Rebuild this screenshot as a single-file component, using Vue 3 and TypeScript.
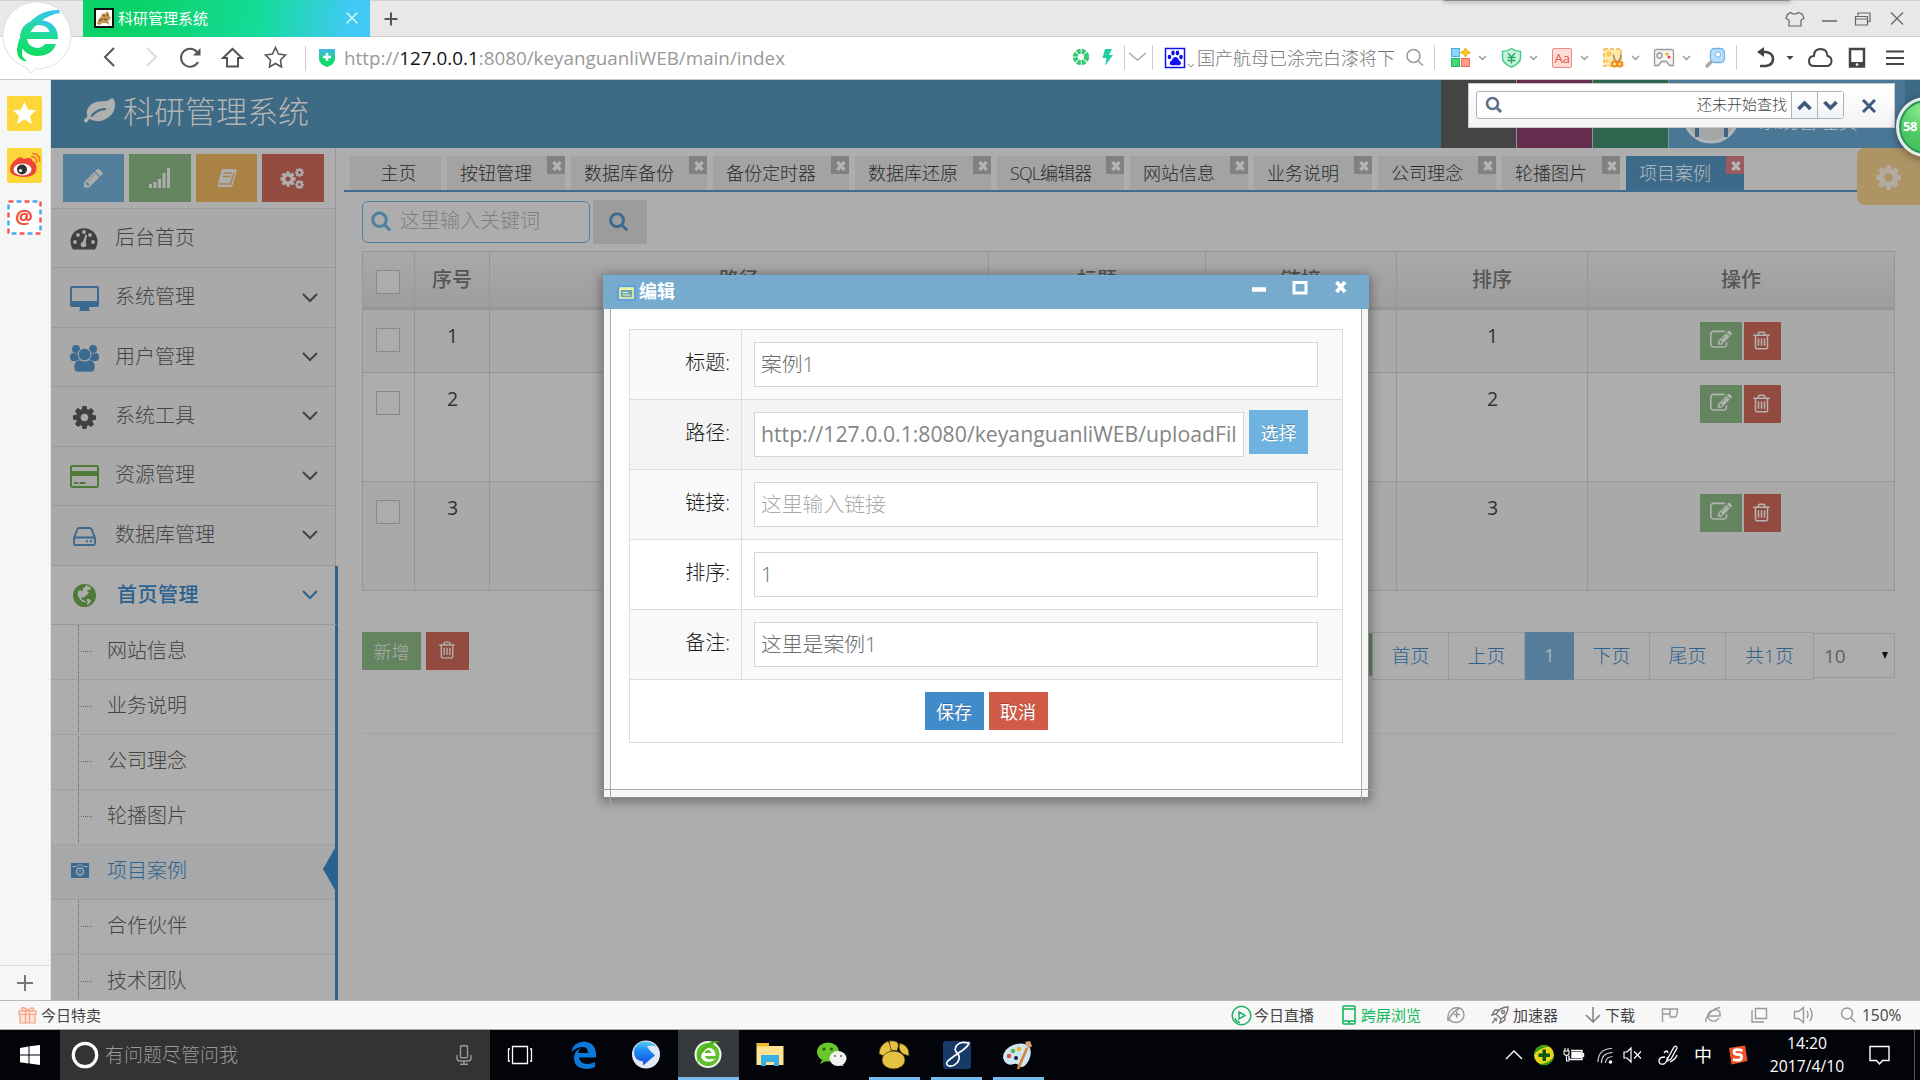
<script setup lang="ts">
interface Tab { name: string; w: number; closable: boolean; active?: boolean; tight?: boolean }
interface Menu { name: string; icon: string; arrow: boolean; open?: boolean }
interface Row { n: number; h: number }
interface Field { label: string; value: string; kind: string; placeholder?: boolean; pick?: boolean }

const P: Record<string, string> = {
  search: 'M1152 832q0-185-131.500-316.500t-316.500-131.500-316.500 131.500-131.500 316.500 131.500 316.500 316.500 131.500 316.500-131.500 131.500-316.500zM1664 1664q0 52-38 90t-90 38q-54 0-90-38l-343-342q-179 124-399 124-143 0-273.500-55.500t-225-150-150-225-55.500-273.500 55.500-273.500 150-225 225-150 273.500-55.500 273.500 55.500 225 150 150 225 55.500 273.500q0 220-124 399l343 343q37 37 37 90z',
  gear: 'M1024 896q0-106-75-181t-181-75-181 75-75 181 75 181 181 75 181-75 75-181zM1536 787v222q0 12-8 23t-20 13l-185 28q-19 54-39 91 35 50 107 138 10 12 10 25t-9 23q-27 37-99 108t-94 71q-12 0-26-9l-138-108q-44 23-91 38-16 136-29 186-7 28-36 28h-222q-14 0-24.500-8.500t-11.500-21.500l-28-184q-49-16-90-37l-141 107q-10 9-25 9-14 0-25-11-126-114-165-168-7-10-7-23 0-12 8-23 15-21 51-66.500t54-70.500q-27-50-41-99l-183-27q-13-2-21-12.500t-8-23.500v-222q0-12 8-23t19-13l186-28q14-46 39-92-40-57-107-138-10-12-10-24 0-10 9-23 26-36 98.500-107.500t94.500-71.500q13 0 26 10l138 107q44-23 91-38 16-136 29-186 7-28 36-28h222q14 0 24.500 8.500t11.500 21.500l28 184q49 16 90 37l142-107q9-9 24-9 13 0 25 10 129 119 165 170 7 8 7 22 0 12-8 23-15 21-51 66.500t-54 70.500q26 50 41 98l183 28q13 2 21 12.500t8 23.500z',
  trash: 'M512 736v576q0 14-9 23t-23 9h-64q-14 0-23-9t-9-23v-576q0-14 9-23t23-9h64q14 0 23 9t9 23zM768 736v576q0 14-9 23t-23 9h-64q-14 0-23-9t-9-23v-576q0-14 9-23t23-9h64q14 0 23 9t9 23zM1024 736v576q0 14-9 23t-23 9h-64q-14 0-23-9t-9-23v-576q0-14 9-23t23-9h64q14 0 23 9t9 23zM1152 1460v-948h-896v948q0 22 7 40.500t14.500 27 10.500 8.500h832q3 0 10.500-8.500t14.500-27 7-40.500zM480 384h448l-48-117q-7-9-17-11h-317q-10 2-17 11zM1408 416v64q0 14-9 23t-23 9h-96v948q0 83-47 143.500t-113 60.500h-832q-66 0-113-58.500t-47-141.500v-952h-96q-14 0-23-9t-9-23v-64q0-14 9-23t23-9h309l70-167q15-37 54-63t79-26h320q40 0 79 26t54 63l70 167h309q14 0 23 9t9 23z',
  edit: 'M888 1184l116-116-152-152-116 116v56h96v96h56zM1328 464q-16-16-33 1l-350 350q-17 17-1 33t33-1l350-350q17-17 1-33zM1408 1058v190q0 119-84.500 203.500t-203.500 84.500h-832q-119 0-203.500-84.500t-84.500-203.500v-832q0-119 84.500-203.500t203.500-84.500h832q63 0 117 25 15 7 18 23 3 17-9 29l-49 49q-14 14-32 8-23-6-45-6h-832q-66 0-113 47t-47 113v832q0 66 47 113t113 47h832q66 0 113-47t47-113v-126q0-13 9-22l64-64q15-15 35-7t20 29zM1312 320l288 288-672 672h-288v-288zM1756 452l-92 92-288-288 92-92q28-28 68-28t68 28l152 152q28 28 28 68t-28 68z',
  pencil: 'M363 1536l91-91-235-235-91 91v107h128v128h107zM886 608q0-22-22-22-10 0-17 7l-542 542q-7 7-7 17 0 22 22 22 10 0 17-7l542-542q7-7 7-17zM832 416l416 416-832 832h-416v-416zM1515 512q0 53-37 90l-166 166-416-416 166-165q36-38 90-38 53 0 91 38l235 234q37 39 37 91z',
  leaf: 'M1280 704q0-26-19-45t-45-19q-172 0-318 49.500t-259.500 134-235.500 219.500q-19 21-19 45 0 26 19 45t45 19q24 0 45-19 27-24 74-71t67-66q137-124 268.500-176t313.500-52q26 0 45-19t19-45zM1792 446q0 95-20 193-46 224-184.500 383t-357.500 268q-214 108-438 108-148 0-286-47-15-5-88-42t-96-37q-16 0-39.500 32t-45 70-52.500 70-60 32q-43 0-63.500-17.500t-45.500-59.500q-2-4-6-11t-5.500-10-3-9.500-1.500-13.500q0-35 31-73.500t68-65.500 68-56 31-48q0-4-14-38t-16-44q-9-51-9-104 0-115 43.500-220t119-184.500 170.500-139 204-95.500q55-18 145-25.500t179.500-9 178.500-6 163.500-24 113.500-56.500l29.500-29.500t29.500-28 27-20 36.500-16 43.500-4.500q39 0 70.500 46t47.500 112 24 124 8 96z',
}

const tabs: Tab[] = [
  { name: '主页', w: 91, closable: false },
  { name: '按钮管理', w: 118, closable: true },
  { name: '数据库备份', w: 136, closable: true },
  { name: '备份定时器', w: 136, closable: true },
  { name: '数据库还原', w: 136, closable: true },
  { name: 'SQL编辑器', w: 127, closable: true, tight: true },
  { name: '网站信息', w: 118, closable: true },
  { name: '业务说明', w: 118, closable: true },
  { name: '公司理念', w: 118, closable: true },
  { name: '轮播图片', w: 118, closable: true },
  { name: '项目案例', w: 118, closable: true, active: true },
]
const menus: Menu[] = [
  { name: '后台首页', icon: 'dash', arrow: false },
  { name: '系统管理', icon: 'desktop', arrow: true },
  { name: '用户管理', icon: 'users', arrow: true },
  { name: '系统工具', icon: 'gear', arrow: true },
  { name: '资源管理', icon: 'card', arrow: true },
  { name: '数据库管理', icon: 'hdd', arrow: true },
  { name: '首页管理', icon: 'globe', arrow: true, open: true },
]
const subs: string[] = ['网站信息', '业务说明', '公司理念', '轮播图片', '项目案例', '合作伙伴', '技术团队']
const rows: Row[] = [{ n: 1, h: 63 }, { n: 2, h: 109 }, { n: 3, h: 109 }]
const fields: Field[] = [
  { label: '标题:', value: '案例1', kind: 'odd' },
  { label: '路径:', value: 'http://127.0.0.1:8080/keyanguanliWEB/uploadFil', kind: 'hover', pick: true },
  { label: '链接:', value: '这里输入链接', kind: 'odd', placeholder: true },
  { label: '排序:', value: '1', kind: 'even' },
  { label: '备注:', value: '这里是案例1', kind: 'odd' },
]
</script>

<template>
  <div class="screen">
    <header class="tabstrip">
      <div class="btab">
        <svg class="fav" width="20" height="20" viewBox="0 0 20 20"><rect x="1" y="1" width="18" height="18" fill="#fff" stroke="#111" stroke-width="2" /><path d="M3 16l2-6 2-1 1-4 2 1 4-3 1 4 2 3-3 3 2 4-4-2-4 0-2 2z" fill="#c9954c" /><path d="M9 7l2 1M13 6l1 2M5 13l4-2M10 11l3 1" stroke="#5f4425" /></svg>
        <span class="btitle">科研管理系统</span>
        <svg width="12" height="12" viewBox="0 0 12 12"><path d="M.7.7l10.600 10.600M11.300.7L.7 11.300" stroke="#e8fff4" stroke-width="1.300" /></svg>
      </div>
      <svg class="plus" width="14" height="14" viewBox="0 0 14 14"><path d="M7 .5v13M.5 7h13" stroke="#555" stroke-width="2" /></svg>
      <svg class="winbtns" width="130" height="36" viewBox="0 0 130 36" fill="none" stroke="#666" stroke-width="1.200">
        <path d="M7.500 11.500q4 3 8 0l4 2 1.500 4-3 1.500v6h-12v-6l-3-1.500 1.500-4z" />
        <path d="M39 20h15" stroke-width="1.500" />
        <path d="M72.500 15.500h12v8.500h-12zM72.500 18h12M75 14.500v-2.500h12v8.500h-2" />
        <path d="M108 11.500l12 12M120 11.500l-12 12" />
      </svg>
    </header>

    <div class="toolbar">
      <svg class="nav" width="205" height="42" viewBox="95 37 205 42" fill="none" stroke="#555" stroke-width="2">
        <path d="M114 48l-9 9 9 9" />
        <path d="M147 48l9 9-9 9" stroke="#ddd" />
        <path d="M198 62a9 9 0 1 1-1-10" /><path d="M200.500 48v7.500h-7.500z" fill="#555" stroke="none" />
        <path d="M223 58l9.500-9 9.500 9h-4v8.500h-11v-8.500z" />
        <path d="M275.500 47.500l3 6.500 7 1-5 5 1 7-6-3.500-6 3.500 1-7-5-5 7-1z" stroke-width="1.600" />
      </svg>
      <i class="vline first" />
      <svg class="shield" width="16" height="18" viewBox="0 0 16 18"><defs><linearGradient id="sg" x1="0" y1="0" x2="0" y2="1"><stop stop-color="#42b8ee" /><stop offset=".6" stop-color="#12d970" /></linearGradient></defs><path d="M0 0h16v10q0 5-8 8-8-3-8-8z" fill="url(#sg)" /><path d="M8 4v8M4 8h8" stroke="#fff" stroke-width="2.600" /></svg>
      <span class="url">http://<b>127.0.0.1</b>:8080/keyanguanliWEB/main/index</span>
      <svg class="mid" width="126" height="42" viewBox="1070 37 126 42" fill="none">
        <circle cx="1081" cy="57" r="5.700" stroke="#35c873" stroke-width="5" stroke-dasharray="3.500 .97" />
        <path d="M1105 49h7l-3 6h4l-8 11 1.500-8h-4z" fill="#20d0a0" />
        <path d="M1124.500 45v25M1152.500 45v25" stroke="#ccc" />
        <path d="M1129 53l8.500 7 8.500-7" stroke="#aaa" stroke-width="1.600" />
        <rect x="1165.500" y="48.500" width="19" height="19" fill="#fff" stroke="#1010f0" stroke-width="1.500" />
        <g fill="#1010f0"><ellipse cx="1169.500" cy="57" rx="1.800" ry="2.300" /><ellipse cx="1173" cy="53" rx="1.800" ry="2.400" /><ellipse cx="1177.500" cy="53" rx="1.800" ry="2.400" /><ellipse cx="1181" cy="57" rx="1.800" ry="2.300" /><path d="M1175.200 57q2.500 0 3.500 3 3 2 2.300 4-1.200 2-5.300 1-5 1-6-1-.7-2 2.300-4 1-3 3.200-3z" /></g>
        <path d="M1188 64l3 3 3-3" stroke="#888" />
      </svg>
      <span class="hot">国产航母已涂完白漆将下</span>
      <svg class="ext" width="510" height="42" viewBox="1400 37 510 42" fill="none">
        <circle cx="1413.500" cy="56" r="6.500" stroke="#999" stroke-width="1.500" /><path d="M1418 61l5 4.500" stroke="#999" stroke-width="1.500" />
        <path d="M1434.500 45v25M1736.500 45v25" stroke="#ccc" />
        <rect x="1451.500" y="48.500" width="8" height="8" fill="#8fd5fa" stroke="#4aa8e8" /><rect x="1451.500" y="58.500" width="8" height="8" fill="#45d877" stroke="#15b858" /><rect x="1461.500" y="58.500" width="8" height="8" fill="#ffa08e" stroke="#f26a55" /><path d="M1465.500 48l1.500 3 3.500 1.500-3.500 1.500-1.500 3-1.500-3-3.500-1.500 3.500-1.500z" fill="#ffcf20" stroke="#f0a000" />
        <path d="M1511.500 48.500q4 3 9 3v6q0 6-9 9.500-9-3.500-9-9.500v-6q5 0 9-3z" fill="#c9f5dc" stroke="#48c886" stroke-width="1.500" /><path d="M1508 53l3.500 4 3.500-4M1507.500 57.500h8M1507.500 60.500h8M1511.500 57v6.500" stroke="#28a860" stroke-width="1.400" />
        <rect x="1552.500" y="48.500" width="19" height="19" rx="1.500" fill="#ffdcd7" stroke="#e98b82" />
        <text x="1554.500" y="63" class="aa">Aa</text>
        <rect x="1604" y="49" width="17" height="17" fill="#ffe9a8" stroke="#f2bc4d" stroke-width="1.600" stroke-dasharray="4 2" /><circle cx="1609" cy="54" r="2.500" fill="#f7c95c" /><circle cx="1607" cy="61" r="1.500" fill="#f7c95c" /><path d="M1613.500 54.500q0 5 4 8M1621 54.500q0 5-4 8" stroke="#9a8a70" stroke-width="1.600" /><circle cx="1614.500" cy="64" r="2.500" stroke="#ef8e1c" stroke-width="2" /><circle cx="1620" cy="64" r="2.500" stroke="#ef8e1c" stroke-width="2" />
        <path d="M1656 49.500h16q1.500 0 1.500 2v14h-4l-3-4h-5l-3 4h-4v-14q0-2 1.500-2z" fill="#f4f4f4" stroke="#999" stroke-width="1.300" /><circle cx="1659.500" cy="55.500" r="2.500" stroke="#999" stroke-width="1.300" /><circle cx="1667" cy="54" r="1.500" fill="#f5a623" /><circle cx="1669" cy="57" r="1.500" fill="#e8433c" />
        <path d="M1712 61l-5 5" stroke="#aaa" stroke-width="3.500" stroke-linecap="round" /><rect x="1710.500" y="48.500" width="14" height="14" rx="4" fill="#b8dffa" stroke="#6fb4e5" stroke-width="1.300" /><circle cx="1718" cy="54.500" r="2.700" fill="#fff" stroke="#6fb4e5" />
        <path d="M1479 56l3.500 3.500 3.500-3.500M1530 56l3.500 3.500 3.500-3.500M1581 56l3.500 3.500 3.500-3.500M1632 56l3.500 3.500 3.500-3.500M1683 56l3.500 3.500 3.500-3.500" stroke="#999" stroke-width="1.400" />
        <path d="M1760 52h6q7 1 7 7t-7 7h-6" stroke="#444" stroke-width="2.600" /><path d="M1757 52l7-5v10z" fill="#444" /><path d="M1786.500 56h7l-3.500 4z" fill="#444" />
        <path d="M1814 66q-5 0-5-5t5-5q0-7 6.500-7t7 7q4 1 4 5t-4 5z" stroke="#444" stroke-width="2" />
        <rect x="1850" y="49" width="14" height="17.500" stroke="#444" stroke-width="2.500" /><path d="M1849 64.500h16" stroke="#444" stroke-width="5" /><circle cx="1857" cy="64.500" r="1.300" fill="#fff" />
        <path d="M1886 51.500h18M1886 58h18M1886 64h18" stroke="#444" stroke-width="2" />
      </svg>
    </div>

    <div class="middle">
      <aside class="rail">
        <svg width="35" height="35" viewBox="0 0 35 35"><rect width="35" height="35" rx="2" fill="#fdd63a" /><path d="M17.500 6l3.500 7.500 8 .8-6 5.700 2 8-7.500-4.500-7.500 4.500 2-8-6-5.700 8-.8z" fill="#fff" /></svg>
        <svg width="35" height="35" viewBox="0 0 35 35"><rect width="35" height="35" rx="2" fill="#fdd63a" /><path d="M3 22q0-7 8-12 4-2 5.500 1 8-3 9 2 4 2 4 7 0 9-13 9-13.500-1-13.500-7z" fill="#ee4538" /><ellipse cx="15.500" cy="21.500" rx="9" ry="6" fill="#fff" /><circle cx="15" cy="21.500" r="5" fill="#333" /><circle cx="13.500" cy="22.500" r="1.600" fill="#fff" /><path d="M24 9q6-1 5.500 6M25 5.500q8.500 0 7.500 8.500" fill="none" stroke="#f27b24" stroke-width="1.700" /></svg>
        <svg width="35" height="35" viewBox="0 0 35 35"><rect x="1.500" y="1.500" width="32" height="32" fill="#fff" stroke="#f45b45" stroke-width="2.500" stroke-dasharray="5 11" /><rect x="1.500" y="1.500" width="32" height="32" fill="none" stroke="#45acf0" stroke-width="2.500" stroke-dasharray="5 11" stroke-dashoffset="8" /><text x="8" y="23.500" class="at">@</text></svg>
        <div class="railadd"><svg width="16" height="16" viewBox="0 0 16 16"><path d="M8 0v16M0 8h16" stroke="#777" stroke-width="2" /></svg></div>
      </aside>

      <main class="page">
        <div class="top">
          <svg class="leaf" width="31" height="31" viewBox="0 0 1792 1792"><path :d="P.leaf" fill="#b0b0b0" /></svg>
          <span class="brand">科研管理系统</span>
          <div class="tiles"><i class="t1" /><i class="t2" /><i class="t3" />
            <div class="user">
              <svg width="60" height="60" viewBox="0 0 60 60"><circle cx="30" cy="30" r="27" fill="#a3a5a7" stroke="#b0b5b9" stroke-width="3" /><path d="M16 40v12M45 40v12" stroke="#3f6384" stroke-width="4" /></svg>
              <span>系统管理员</span>
            </div>
          </div>
        </div>
        <div class="body">
          <div class="side">
            <div class="shortcuts">
              <span class="s1"><svg width="19" height="22" viewBox="0 0 1536 1792"><path :d="P.pencil" fill="#adadad" /></svg></span>
              <span class="s2"><svg width="22" height="20" viewBox="0 0 22 20" fill="#adadad"><path d="M0 16h3v4h-3zM4.500 14h3v6h-3zM9 11h3v9h-3zM13.500 5h3v15h-3zM18 0h3v20h-3z" /></svg></span>
              <span class="s3"><svg width="22" height="20" viewBox="0 0 22 20"><path d="M6.500 1h12q2.500 0 2 2.500l-3.500 13q-.5 2.500-3 2.500h-10q-3-.5-2-3l3-12.500q.5-2.500 1.500-2.500z" fill="#adadad" /><path d="M8 5h8M7 8.500h8M3.500 16h11l3.500-11" fill="none" stroke="#aa8344" stroke-width="1.400" /></svg></span>
              <span class="s4"><svg width="26" height="23" viewBox="0 0 26 23" fill="#adadad"><svg x="0" y="3" width="16" height="18" viewBox="0 0 1536 1792"><path :d="P.gear" /></svg><svg x="15" y="0" width="9" height="11" viewBox="0 0 1536 1792"><path :d="P.gear" /></svg><svg x="15" y="12" width="9" height="11" viewBox="0 0 1536 1792"><path :d="P.gear" /></svg></svg></span>
            </div>
            <div v-for="m in menus" :key="m.name" class="menu" :class="{ open: m.open }">
              <span class="micon">
                <svg v-if="m.icon === 'dash'" width="28" height="22" viewBox="0 0 28 22"><path d="M3 21.500a13.500 13.500 0 1 1 22 0z" fill="#404040" /><g fill="#a9a9a9"><circle cx="5" cy="14" r="1.900" /><circle cx="8" cy="7" r="1.900" /><circle cx="14" cy="4" r="1.900" /><circle cx="20" cy="7" r="1.900" /><circle cx="23" cy="14" r="1.900" /><circle cx="13.500" cy="16.500" r="2.800" /><path d="M12.500 15l3-8.500 1.500.5-1.500 9z" /></g></svg>
                <svg v-else-if="m.icon === 'desktop'" width="29" height="25" viewBox="0 0 29 25"><path d="M2 0h25q2 0 2 2v17q0 2-2 2h-8v2l1 2h-11l1-2v-2h-8q-2 0-2-2v-17q0-2 2-2zM2 2v13h25v-13z" fill="#3c698f" fill-rule="evenodd" /></svg>
                <svg v-else-if="m.icon === 'users'" width="29" height="27" viewBox="0 0 29 27" fill="#3c698f"><circle cx="6" cy="4" r="4" /><circle cx="23" cy="4" r="4" /><path d="M0 12q0-4 3-4 3 1 5 0 0 5 3 8h-8q-3 0-3-4zM29 12q0-4-3-4-3 1-5 0 0 5-3 8h8q3 0 3-4z" /><circle cx="14.500" cy="9.500" r="6.300" stroke="#a9a9a9" /><path d="M4 23q0-8 5-8 5.500 2.500 11 0 5 0 5 8 0 4-4 4h-13q-4 0-4-4z" stroke="#a9a9a9" stroke-width=".6" /></svg>
                <svg v-else-if="m.icon === 'gear'" width="23" height="27" viewBox="0 0 1536 1792"><path :d="P.gear" fill="#404040" /></svg>
                <svg v-else-if="m.icon === 'card'" width="29" height="23" viewBox="0 0 29 23"><rect x="1" y="1" width="27" height="21" rx="1.500" fill="none" stroke="#4d7a36" stroke-width="2" /><path d="M1 6h27v5h-27zM4 17h4v2h-4zM9.500 17h6v2h-6z" fill="#4d7a36" /></svg>
                <svg v-else-if="m.icon === 'hdd'" width="23" height="19" viewBox="0 0 23 19" fill="none" stroke="#3c698f" stroke-width="1.900"><path d="M1 11l3.500-9q.4-1 1.500-1h11q1 0 1.500 1l3.500 9v5.500q0 1.500-1.500 1.500h-18q-1.500 0-1.500-1.500zM1 10.500h21" /><path d="M13 14.300h2M17 14.300h2" /></svg>
                <svg v-else width="23" height="23" viewBox="0 0 23 23"><circle cx="11.500" cy="11.500" r="11.500" fill="#4d7a36" /><path d="M13 1.500l3 .8 2 2-1 2.200-2-1-1 2 2 .5-1.500 2.500-2 1-1 2-3-.5.5 2.500 2 1 2 1-1 1-3-1-3-3.500-1.500-4 1-3 2-1 1 1.500 1.500-1.500-.5-2 2.500-.5 0-1.500zM13.500 15l3 0 1.500 2-2 3-2 1 .5-3z" fill="#adadad" /></svg>
              </span>
              <span class="mname">{{ m.name }}</span>
              <svg v-if="m.arrow" class="chev" width="16" height="10" viewBox="0 0 16 10"><path d="M1 1l7 7 7-7" fill="none" stroke="currentColor" stroke-width="2" /></svg>
            </div>
            <div class="subs">
              <div v-for="s in subs" :key="s" class="sub" :class="{ on: s === '项目案例' }">
                <svg v-if="s === '项目案例'" class="cam" width="18" height="15" viewBox="0 0 18 15"><path d="M0 0h18v15h-18z" fill="#3c698f" /><path d="M1 3.500h5l1-1.500h4l1 1.500h5" fill="none" stroke="#9a9fa4" /><circle cx="9" cy="8.500" r="3.500" fill="none" stroke="#a6a9ac" stroke-width="1.400" /><path d="M9 7v3" stroke="#a6a9ac" /></svg>
                <i v-else class="dash" />
                <span>{{ s }}</span>
                <i v-if="s === '项目案例'" class="arrow" />
              </div>
            </div>
          </div>

          <section class="content">
            <div class="tabs">
              <div v-for="t in tabs" :key="t.name" class="tab" :class="{ on: t.active, home: !t.closable, tight: t.tight }" :style="{ width: t.w + 'px' }">
                <span>{{ t.name }}</span>
                <i v-if="t.closable" class="x"><svg width="10" height="10" viewBox="0 0 10 10"><path d="M1.500 1l7 8M8.500 1l-7 8" stroke="#b4b4b4" stroke-width="3.400" /></svg></i>
              </div>
            </div>
            <div class="inner">
              <div class="find">
                <div class="kw"><svg width="20" height="21" viewBox="0 0 1664 1792"><path :d="P.search" fill="#4c80a0" /></svg><span>这里输入关键词</span></div>
                <div class="go"><svg width="19" height="20" viewBox="0 0 1664 1792"><path :d="P.search" fill="#3c698f" /></svg></div>
              </div>
              <div class="grid">
                <div class="tr th"><div><i class="cb" /></div><div>序号</div><div>路径</div><div>标题</div><div>链接</div><div>排序</div><div>操作</div></div>
                <div v-for="r in rows" :key="r.n" class="tr" :class="{ alt: r.n !== 2 }" :style="{ height: r.h + 'px' }">
                  <div><i class="cb" /></div><div>{{ r.n }}</div><div /><div /><div /><div>{{ r.n }}</div>
                  <div class="ops"><span class="e"><svg width="22" height="22" viewBox="0 0 1792 1792"><path :d="P.edit" /></svg></span><span class="d"><svg width="17" height="21" viewBox="0 0 1408 1792"><path :d="P.trash" /></svg></span></div>
                </div>
              </div>
              <div class="foot">
                <span class="add">新增</span><span class="del"><svg width="16" height="20" viewBox="0 0 1408 1792"><path :d="P.trash" fill="#adadad" /></svg></span>
                <i class="sp" /><i class="gobtn" />
                <div class="pager"><span>首页</span><span>上页</span><span class="cur">1</span><span>下页</span><span>尾页</span><span class="tot">共1页</span></div>
                <div class="sel"><span>10</span><svg width="6" height="7" viewBox="0 0 6 7"><path d="M0 0h6l-3 7z" fill="#111" /></svg></div>
              </div>
              <div class="hr" />
            </div>
          </section>
        </div>

        <div class="setbox"><svg width="25" height="29" viewBox="0 0 1536 1792"><path :d="P.gear" fill="#b3aaa0" /></svg></div>

        <div class="findbar">
          <div class="fin"><svg width="18" height="18" viewBox="0 0 18 18"><circle cx="7.500" cy="7.500" r="5.500" fill="none" stroke="#5b7188" stroke-width="2.600" /><path d="M12 12l4 4" stroke="#5b7188" stroke-width="3" /></svg><span>还未开始查找</span>
            <i class="fb"><svg width="15" height="11" viewBox="0 0 15 11"><path d="M1.500 9l6-6 6 6" fill="none" stroke="#40597a" stroke-width="3.600" /></svg></i><i class="fb"><svg width="15" height="11" viewBox="0 0 15 11"><path d="M1.500 2l6 6 6-6" fill="none" stroke="#40597a" stroke-width="3.600" /></svg></i></div>
          <svg class="fx" width="14" height="14" viewBox="0 0 14 14"><path d="M1 1l12 12M13 1L1 13" stroke="#40597a" stroke-width="3" /></svg>
        </div>
        <div class="ball">58</div>

        <div class="dialog">
          <div class="dhead">
            <svg class="di" width="15" height="12" viewBox="0 0 15 12"><rect x="1" y="1" width="13" height="10" fill="#6fa8b8" stroke="#eef29b" stroke-width="1.600" /><path d="M1 2h13" stroke="#eef29b" stroke-width="2" /><path d="M4 5.500h5M4 8h7" stroke="#eef6b8" /></svg>
            <b>编辑</b>
            <svg width="100" height="16" viewBox="0 0 100 16" fill="none" stroke="#fff"><path d="M0 9.500h14" stroke-width="4.500" /><rect x="42" y="2.500" width="12" height="10.500" stroke-width="3" /><path d="M84.500 2l8.500 10M93 2l-8.500 10" stroke-width="3.600" /></svg>
          </div>
          <div class="dbody">
            <div class="frame">
              <div class="form">
                <div v-for="f in fields" :key="f.label" class="fr" :class="f.kind">
                  <div class="lab">{{ f.label }}</div>
                  <div class="val"><div class="inp" :class="{ ph: f.placeholder, short: f.pick }">{{ f.value }}</div><span v-if="f.pick" class="pick">选择</span></div>
                </div>
                <div class="acts"><span class="save">保存</span><span class="cancel">取消</span></div>
              </div>
            </div>
          </div>
        </div>
      </main>
    </div>

    <div class="status">
      <svg class="gift" width="19" height="18" viewBox="0 0 19 18" fill="#ffe3d6" stroke="#f5a184" stroke-width="1.200"><path d="M9.500 4q-5-4-6-1.500t6 2q7 1 6-1.500t-6 1z" /><path d="M1 5h17v3.500h-17zM2 8.500h15v8.500h-15zM7.500 5v12M11.500 5v12" /></svg>
      <span class="sale">今日特卖</span>
      <svg class="play" width="21" height="21" viewBox="0 0 21 21" fill="none" stroke="#22b26a" stroke-width="1.500"><circle cx="10.500" cy="10.500" r="9.300" /><path d="M8 7l6 3.500-6 3.500zM4 13q1 4 5 4.500" /></svg>
      <span class="live">今日直播</span>
      <svg width="14" height="20" viewBox="0 0 14 20" fill="none" stroke="#13b85a" stroke-width="1.600"><rect x="1" y="1" width="12" height="18" rx="1" /><path d="M1 4h12M1 16h12M6 17.500h2" /></svg>
      <span class="cross">跨屏浏览</span>
      <svg width="18" height="18" viewBox="0 0 18 18" fill="none" stroke="#999" stroke-width="1.400"><path d="M10 1.500q6.500.5 7 7-.5 7.500-8 8-4 0-6-2.500M1 15q-1-9 5-12.500 4-1.500 6 0-8 4-10.500 12.500" /><path d="M6.500 8.500h6.500M9.700 5.300v6.500" /></svg>
      <svg class="s-b" width="18" height="18" viewBox="0 0 18 18" fill="none" stroke="#777" stroke-width="1.400"><path d="M5 8q4-7 12-7 0 8-7 12zM5 8l-4 1 3-5h4M10 13l-1 4 5-3v-4M1 17l5-5M3 12l3 3" /><circle cx="12" cy="6" r="1.500" /></svg>
      <span class="acc">加速器</span>
      <svg class="s-c" width="16" height="16" viewBox="0 0 16 16" fill="none" stroke="#888" stroke-width="1.600"><path d="M8 0v14M1 8l7 7 7-7" /></svg>
      <span class="dl">下载</span>
      <svg class="s-d" width="245" height="28" viewBox="1640 1001 245 28" fill="none" stroke="#999" stroke-width="1.400">
        <path d="M1662.500 1022v-13h15q0 6-2 8h-5l-1-3h-7M1670 1009v5" />
        <path d="M1707 1016h13q1-7-6-6-7 2-6 7 2 5 7 4 3-1 4-3M1706 1022q-1-5 6-11 6-4 8-3" />
        <path d="M1755.500 1008.500h11v10h-11zM1752 1010v12h12" />
        <path d="M1794.500 1011.500h4l5-4v15l-5-4h-4zM1807 1011q2 3.500 0 7M1810 1008q4 6.500 0 13" />
        <circle cx="1847" cy="1013.500" r="5.500" /><path d="M1851 1018l4 4" />
      </svg>
      <span class="zoom">150%</span>
    </div>

    <div class="taskbar">
      <div class="start"><svg width="20" height="20" viewBox="0 0 20 20" fill="#fff"><path d="M0 3l8.500-1.500v8h-8.500zM9.500 1.300l10.500-1.300v9.500h-10.500zM0 10.500h8.500v8l-8.500-1.300zM9.500 10.500h10.500v9.500l-10.500-1.500z" /></svg></div>
      <div class="cortana"><svg width="28" height="28" viewBox="0 0 28 28"><circle cx="14" cy="14" r="11.700" fill="none" stroke="#fff" stroke-width="3.200" /></svg><span>有问题尽管问我</span>
        <svg class="mic" width="16" height="20" viewBox="0 0 16 20" fill="none" stroke="#999" stroke-width="1.400"><rect x="4.500" y=".7" width="7" height="12" rx="1" /><path d="M1 10v3q0 3 3 3h8q3 0 3-3v-3M8 16v3M4 19.200h8" /></svg></div>
      <svg class="apps" width="560" height="50" viewBox="490 1030 560 50">
        <defs>
          <linearGradient id="qb" x1="0" y1="0" x2="0" y2="1"><stop stop-color="#5cd0ea" /><stop offset=".35" stop-color="#1f8df5" /><stop offset="1" stop-color="#1450d8" /></linearGradient>
        </defs>
        <path d="M512.500 1046.500h15v17h-15zM510 1049h-1.500v12h1.500M530 1049h1.500v12h-1.500" fill="none" stroke="#fff" stroke-width="1.300" />
        <path d="M571 1053q2-11 13-11.500 12 1 12 13.500v2.500h-17q1 6 8 6.500 4 0 8-2v5q-4 2-9 2-12-1-12-11 0-7 7-10-3 3-3 5h10q0-6-5-6-7 0-12 5.500z" fill="#0c79d8" />
        <circle cx="646" cy="1054.500" r="14" fill="#dfe8f4" /><path d="M634 1052q1-10 11-10.500 7 0 11 5-6-2-9 0l2 3 6 6-12 10v-4q-9-1-9-9.500z" fill="url(#qb)" />
        <rect x="678" y="1030" width="61" height="50" fill="#35383c" />
        <circle cx="708" cy="1054.500" r="13.500" fill="#f2f8ee" /><circle cx="708" cy="1054.500" r="11.500" fill="#5fc12c" /><path d="M701 1056h14.500q0-8-7-8-7 1-7.500 7 0 6 7.500 7 4 0 6.500-3h-4q-5 1-6-3z" fill="#fff" /><path d="M704.500 1053h7q-1-3-3.500-3t-3.500 3z" fill="#5fc12c" /><path d="M698 1069q-2-10 7-19 8-8 15-8-6-3-13 2-12 9-9 25z" fill="#52b31f" />
        <path d="M756.500 1043h12v3h15v19h-27z" fill="#ffe391" /><path d="M757 1043h12v3.500h-12z" fill="#f0b92c" /><path d="M761 1066v-11h18v11h-5v-4h-8v4z" fill="#37aee5" />
        <ellipse cx="828" cy="1052" rx="11" ry="9.500" fill="#67c72c" /><path d="M822 1060l-2 4 6-3z" fill="#67c72c" /><ellipse cx="838" cy="1058.500" rx="8.500" ry="7.500" fill="#f2f2f2" /><path d="M842 1064l2 2-5-1z" fill="#f2f2f2" /><circle cx="824" cy="1049" r="1.500" fill="#2b5c10" /><circle cx="831.500" cy="1049" r="1.500" fill="#2b5c10" /><circle cx="835" cy="1056" r="1" fill="#666" /><circle cx="841" cy="1056" r="1" fill="#666" />
        <g fill="#e5c244" stroke="#3a2f08" stroke-width=".7"><path d="M879 1054q0-9 9-13l5 9-9 6z" /><path d="M889 1041q10-1 9.500 5l-1.500 5-6-1z" /><path d="M900 1043q10 3 9 13l-6-2q-4-3-4-7z" /><ellipse cx="893.500" cy="1060" rx="11.500" ry="9" /></g>
        <rect x="943" y="1041" width="28" height="28" rx="3" fill="#173a66" /><path d="M968 1043q-7-2-11 2-4 5 1 9 3 4-1 9-4 4-8 3-5-2 0-6t11-8 8-7 0-2z" fill="none" stroke="#fff" stroke-width="1.700" />
        <path d="M1003 1058q0-9 10-13 12-4 17 3 2 6-1 12-4 8-9 7-2-4-6-3-8 3-11-6z" fill="#cfe6f4" /><circle cx="1009" cy="1056" r="2.300" fill="#e25241" /><circle cx="1013" cy="1051" r="2.300" fill="#62b74f" /><circle cx="1019" cy="1049" r="2.300" fill="#f1b22c" /><circle cx="1016" cy="1058" r="2" fill="#132a44" /><path d="M1018 1069l9-21" stroke="#d98333" stroke-width="2.600" /><path d="M1025 1042l5-1 2 5-4 3z" fill="#d9a176" />
        <path d="M678 1077h61v3h-61zM869 1077h51v3h-51zM931 1077h51v3h-51zM993 1077h51v3h-51z" fill="#76b9ed" />
      </svg>
      <i class="sp" />
      <svg class="tray" width="190" height="50" viewBox="1500 1030 190 50" fill="none" stroke="#fff" stroke-width="1.400">
        <path d="M1505 1059l8-8 8 8" />
        <g stroke="none"><circle cx="1543" cy="1055" r="10" fill="#e8d81c" /><path d="M1533 1055a10 10 0 0 1 15-8.500q-10 1-15 8.500zM1553 1056a10 10 0 0 1-15 8q10 0 15-8z" fill="#2f9a18" /><path d="M1541.500 1049.500h3.500v4h4v3.500h-4v4h-3.500v-4h-4v-3.500h4z" fill="#0f5512" /></g>
        <path d="M1570 1050.500h11v9h-13v-4M1582.500 1053v4" /><path d="M1571 1052.500h9v5h-9z" fill="#fff" /><path d="M1564 1048v3M1567 1048v3M1563 1051h5v3l-2.500 2-2.500-2zM1565.500 1056v5h3" stroke-width="1.100" />
        <path d="M1597 1062q0-13 14-13.500M1600.500 1063q0-10 11-10.500M1604.500 1063q0-6 7-6.500" stroke="#ccc" stroke-width="1.200" /><circle cx="1609.500" cy="1062" r="1.800" fill="#fff" stroke="none" />
        <path d="M1623 1052h3l4-4v14l-4-4h-3zM1633 1051.500l7 7M1640 1051.500l-7 7" stroke-width="1.200" />
        <path d="M1667 1058l6-11q3-2 3 1l-6 11-4 2zM1664 1057q-6 0-6 4t5 3q4-3 3-7M1669 1062q6-3 7-7M1663 1053q3-4 4 0" stroke-width="1.300" />
      </svg>
      <span class="ime">中</span>
      <svg class="sogou" width="20" height="20" viewBox="0 0 20 20"><path d="M1 3l16-2.500 2.500 15.500-16 3.500z" fill="#ee5425" /><path d="M14.500 5.500q-8-2-8.500 1t4 3 3.500 3.500-8.500 1.500" fill="none" stroke="#fff" stroke-width="2.800" /></svg>
      <div class="clock"><span>14:20</span><span>2017/4/10</span></div>
      <svg class="note" width="21" height="21" viewBox="0 0 21 21" fill="none" stroke="#fff" stroke-width="1.400"><path d="M1 1.500h19v14h-6.500l-3 3.500-3-3.500h-6.500z" /></svg>
      <i class="edge" />
    </div>

    <svg class="logo" width="75" height="76" viewBox="0 0 75 76"><defs><linearGradient id="lg" x1=".6" y1="0" x2=".4" y2="1"><stop stop-color="#35c3f2" /><stop offset=".4" stop-color="#1fdc93" /><stop offset="1" stop-color="#0fdc62" /></linearGradient></defs>
      <path d="M37.500 2a33.500 33.500 0 0 1 0 67h-2l-5 4.500-4-6a33.500 33.500 0 0 1 11-65.500z" fill="#fff" stroke="#d8d8d8" stroke-width=".8" />
      <path d="M20 37q1-16 19-17 19 1 19 19h-31q1 8 10 9 5 0 8-4h11q-4 12-19 12-17-1-17-19zM27.500 32h22q-1-6-10.500-7-10 1-11.500 7z" fill="url(#lg)" fill-rule="evenodd" />
      <path d="M28 61q-11 1-11-12 2-17 15-29 12-11 27-10l1 4q-2-2-8 1-14 5-23 19-8 14-7 21 2 5 6 6z" fill="url(#lg)" />
    </svg>
    <i class="topshade" />
  </div>
</template>

<style>
html, body { margin: 0; overflow: hidden; }
</style>
<style scoped>
* { box-sizing: border-box; }
i { font-style: normal; display: block; }
svg { flex: none; display: block; }
.screen { position: relative; width: 1920px; height: 1080px; display: flex; flex-direction: column; overflow: hidden; font-family: "Open Sans", "Noto Sans CJK SC", sans-serif; white-space: nowrap; }
.sp { flex: 1; }
.tabstrip { height: 37px; flex: none; background: #e8e8e8; border-top: 1px solid #d2d2d2; border-bottom: 1px solid #cfcfcf; padding-left: 83px; display: flex; align-items: center; }
.btab { width: 287px; height: 37px; margin-top: -1px; background: linear-gradient(100deg, #0bd268 20%, #14dc9a 62%, #41c9f5 92%); display: flex; align-items: center; padding: 0 12px 0 11px; color: #fff; }
.fav { margin-right: 4px; }
.btitle { flex: 1; font: 15px "Noto Sans CJK SC", sans-serif; margin-top: -1px; }
.plus { margin-left: 14px; }
.winbtns { margin-left: auto; margin-right: 7px; }
.toolbar { height: 43px; flex: none; background: #fff; border-bottom: 1px solid #c8c8c8; display: flex; align-items: center; padding-left: 95px; }
.vline { width: 1px; height: 25px; background: #ccc; }
.first { margin-left: 5px; }
.shield { margin: 0 9px 0 13px; }
.url { font-size: 18.840px; color: #999; width: 726px; }
.url b { font-weight: 400; color: #111; }
.hot { width: 200px; padding-left: 1px; font: 300 18px "Noto Sans CJK SC", sans-serif; color: #777; margin-right: 4px; margin-top: -2px; }
.aa { font: 13px "Open Sans", sans-serif; fill: #e0524a; }
.at { font: bold 20px "Open Sans", sans-serif; fill: #f0503c; }
.middle { height: 920px; flex: none; display: flex; }
.rail { width: 51px; background: #f5f7f7; border-right: 1px solid #e2e4e4; display: flex; flex-direction: column; align-items: center; padding-top: 16px; gap: 17px; }
.rail > svg { margin-right: 1px; }
.railadd { margin-top: auto; width: 50px; height: 35px; border-top: 1px solid #ddd; display: flex; align-items: center; justify-content: center; }
.page { position: relative; width: 1869px; height: 920px; background: #adadad; overflow: hidden; display: flex; flex-direction: column; }
.top { height: 68px; flex: none; background: #3d6a84; display: flex; align-items: center; padding-left: 33px; }
.leaf { margin-top: -3px; }
.brand { margin: -7px 0 0 8px; font-size: 31px; font-weight: 300; color: #b4b4b4; line-height: 40px; }
.tiles { margin-left: auto; display: flex; gap: 1px; height: 68px; padding-right: 15px; background: linear-gradient(#3d6a84, #3d6a84) right / 15px 100% no-repeat #8d9296; }
.tiles i { width: 75px; }
.t1 { background: #444; } .t2 { background: #652e4e; } .t3 { background: #2f644e; }
.user { width: 236px; background: #4b7797; display: flex; align-items: center; padding-left: 12px; color: #adb5bb; font-size: 20px; font-weight: 300; gap: 17px; }
.user svg { margin-top: 2px; }
.user span { margin-top: 12px; }
.body { display: flex; height: 852px; }
.side { width: 285px; flex: none; border-right: 1px solid #969696; background: #a9a9a9; }
.shortcuts { height: 61px; display: flex; gap: 5px; padding: 6px 0 0 12px; border-bottom: 1px solid #9b9b9b; background: #adadad; }
.shortcuts span { width: 62px; height: 48px; display: flex; align-items: center; justify-content: center; }
.shortcuts .s1, .shortcuts .s3 { width: 61px; }
.s1 { background: #547f9c; } .s2 { background: #64845f; } .s3 { background: #aa8344; } .s4 { background: #934b40; }
.menu { height: 59.430px; border-bottom: 1px solid #999; display: flex; align-items: center; color: #444; font-size: 20px; font-weight: 300; }
.micon { width: 64px; display: flex; justify-content: center; padding-left: 2px; margin-top: 2px; }
.menu .mname { flex: 1; line-height: 30px; margin-top: -1px; }
.chev { margin-right: 17px; }
.open { color: #2b628d; background: #adadad; margin-right: -3px; border-right: 3px solid #2b628d; position: relative; }
.menu.open .mname { padding-left: 2px; font-weight: 500; letter-spacing: .5px; margin-top: 0; }
.subs { height: 376px; overflow: hidden; border-right: 3px solid #2b628d; margin-right: -3px; position: relative; background: #adadad; }
.subs::before { content: ""; position: absolute; left: 27px; top: 0; bottom: 0; border-left: 1px dotted #56697a; }
.sub { height: 55px; border-bottom: 1px dotted #969696; display: flex; align-items: center; font-size: 20px; font-weight: 300; color: #444; position: relative; }
.sub span { margin-top: -1px; line-height: 30px; }
.dash { width: 11px; border-top: 1px dotted #56697a; margin: 0 15px 0 30px; }
.sub.on { color: #2b628d; background: #a6a8aa; }
.cam { margin: -3px 18px 0 20px; }
.arrow { position: absolute; right: 0; top: 3px; border: 21px solid transparent; border-left: 0; border-right: 12px solid #2b628d; }
.content { flex: 1; padding-left: 8px; }
.tabs { width: 1537px; height: 44px; border-bottom: 2px solid #3f6c90; display: flex; gap: 6px; padding: 8px 0 0 6px; }
.tab { flex: none; height: 34px; background: #a3a3a3; color: #2a2a2a; font-size: 18px; font-weight: 300; display: flex; justify-content: space-between; padding-left: 13px; line-height: 35px; }
.tab.home { justify-content: center; padding: 0 0 0 6px; }
.tight { letter-spacing: -.9px; }
.x { width: 18px; height: 18px; background: #818181; display: flex; align-items: center; justify-content: center; margin-right: 0; padding-left: 2px; padding-top: 2px; }
.tab.on { background: #3d6a88; color: #b8bdc1; }
.tab.on .x { background: #9d5a5e; }
.inner { padding: 8px 0 0 18px; width: 1551px; }
.find { display: flex; gap: 3px; height: 44px; align-items: center; }
.kw { width: 228px; height: 42px; border: 1px solid #4c80a0; border-radius: 6px; display: flex; align-items: center; padding-left: 8px; gap: 9px; font-size: 20px; font-weight: 300; color: #808080; }
.kw span { margin-top: -3px; line-height: 28px; }
.kw svg { margin-top: -4px; }
.go { width: 54px; height: 44px; background: #9c9c9c; display: flex; align-items: center; justify-content: center; padding: 0 3px 2px 0; }
.grid { margin-top: 7px; border: 1px solid #969696; border-bottom: 0; width: 1533px; }
.tr { display: grid; grid-template-columns: 52px 75px 499px 217px 191px 191px 306px; border-bottom: 1px solid #969696; color: #333; font-size: 19.500px; }
.tr > div { border-right: 1px solid #969696; text-align: center; line-height: 24px; padding-top: 14px; padding-left: 1px; display: flex; justify-content: center; }
.tr > div:last-child { border-right: 0; }
.tr.alt { background: #a9a9a9; }
.th { height: 58px; background: linear-gradient(#a9a9a9, #9e9e9e); border-bottom: 3px solid #969696; font-size: 20px; font-weight: 500; color: #555; }
.tr.th > div { padding-top: 16px; padding-left: 0; }
.cb { width: 24px; height: 24px; border: 1px solid #888; background: #acacac; margin: 4px 2px 0 0; flex: none; }
.th .cb { margin: 2px 1px 0 0; }
.tr > div.ops { gap: 2px; padding: 12px 1px 0 0; }
.ops span { height: 38px; display: flex; align-items: center; justify-content: center; }
.ops svg { fill: #b4b4b4; margin-top: -2px; }
.e { width: 42px; background: #64845f; } .d { width: 37px; background: #934b40; }
.d svg { margin-right: 3px; }
.foot { display: flex; height: 48px; margin-top: 41px; }
.add, .del { height: 38px; display: flex; align-items: center; justify-content: center; }
.add { width: 59px; background: #64845f; color: #adadad; font-size: 18px; font-weight: 300; margin-right: 5px; }
.del { width: 43px; background: #934b40; padding: 0 2px 2px 0; }
.gobtn { width: 44px; height: 43px; margin: 1px 0 0; background: #64845f; }
.pager { display: flex; color: #2b628d; font-size: 19px; border: 1px solid #969ba0; border-right: 0; }
.pager span { width: 76px; border-right: 1px solid #969ba0; display: flex; align-items: center; justify-content: center; padding-bottom: 2px; font-weight: 300; }
.pager .cur { width: 49px; margin: -1px 0; background: #567d99; color: #a5b4c0; border: 0; font-weight: 400; }
.pager .tot { width: 88px; }
.sel { width: 81px; height: 45px; margin-top: 1px; border: 1px solid #999; border-left: 0; display: flex; justify-content: space-between; align-items: center; padding: 0 6px 0 10px; color: #606060; font-size: 19px; }
.hr { margin-top: 53px; border-top: 1px dotted #999; width: 1533px; }
.setbox { position: absolute; right: 0; top: 68px; width: 63px; height: 57px; background: #ae9364; border-radius: 8px 0 0 8px; display: flex; align-items: center; padding: 1px 0 0 19px; }
.findbar { position: absolute; left: 1417px; top: 3px; width: 427px; height: 45px; background: linear-gradient(#fff, #f3f3f3); border: 1px solid #c9c9c9; display: flex; align-items: center; padding-left: 7px; }
.fin { width: 368px; height: 28px; border: 1px solid #aab2ba; border-radius: 3px; background: #fff; display: flex; align-items: center; padding-left: 8px; font: 15px "Noto Sans CJK SC", sans-serif; color: #444; margin-top: -1px; }
.fin span { margin: -3px 4px 0 auto; font-weight: 300; }
.fb { width: 26px; height: 26px; border-left: 1px solid #aab2ba; display: flex; align-items: center; justify-content: center; background: linear-gradient(#fff, #f0f3f7); }
.fx { margin-left: 18px; }
.ball { position: absolute; left: 1845px; top: 17px; width: 60px; height: 60px; border-radius: 50%; border: 3px solid #e6ece8; background: radial-gradient(circle at 40% 20%, #86ea8c, #4cc964 45%, #3cba56); box-shadow: inset 0 0 0 2px #2f8f5a, 0 2px 8px rgba(0,0,0,.4); color: #fff; font: bold 13px/52px "Open Sans", sans-serif; padding-left: 4px; letter-spacing: -.4px; }
.dialog { position: absolute; left: 552px; top: 195px; width: 766px; height: 523px; box-shadow: 0 2px 10px 2px rgba(0,0,0,.35); border: 1px solid #8a8a8a; background: #f5f5f5; }
.dialog::before { content: ""; position: absolute; left: -4px; right: -10px; top: 513px; height: 1px; background: #a0a0a0; }
.dialog::after { content: ""; position: absolute; left: 6px; right: 6px; bottom: -13px; height: 20px; border: solid #a5a5a5; border-width: 0 1px; }
.dhead { height: 34px; margin: -1px -1px 0; background: #77abce; border-top: 1px solid #6cb0dc; display: flex; align-items: center; padding: 0 16px 2px 15px; color: #fff; font-size: 18px; }
.di { box-shadow: 0 0 0 2px #5f9fe0; margin: 2px 5px 0 1px; }
.dhead b { flex: 1; line-height: 24px; margin-top: -1px; }
.dhead svg:last-child { margin-top: -7px; margin-right: 1px; }
.dbody { padding: 0 6px 8px 6px; height: 489px; }
.frame { position: relative; height: 481px; background: #fff; border: 1px solid #a9a9a9; border-top: 0; padding: 20px 17px 0 18px; }
.form { width: 714px; border: 1px solid #ddd; border-bottom: 0; }
.fr { height: 70px; display: flex; border-bottom: 1px solid #ddd; }
.odd { background: #f9f9f9; } .hover { background: #f4f4f4; }
.lab { width: 112px; border-right: 1px solid #ddd; text-align: right; padding: 18px 11px 0 0; font-size: 20px; font-weight: 300; color: #1a1a1a; line-height: 30px; }
.val { display: flex; padding: 12px 0 0 12px; gap: 5px; }
.inp { width: 564px; height: 45px; border: 1px solid #d5d5d5; background: #fff; padding: 0 6px; color: #6c6c6c; font-size: 20.800px; font-weight: 300; line-height: 42px; overflow: hidden; }
.inp.short { width: 490px; font-weight: 400; color: #858585; font-size: 21.220px; }
.inp.ph { color: #aaa; }
.pick { width: 59px; height: 44px; margin-top: -2px; background: #6fb3e0; }
.pick, .save, .cancel { color: #fff; font-size: 18px; font-weight: 400; text-shadow: 0 -1px 0 rgba(0,0,0,.25); display: flex; align-items: center; justify-content: center; }
.acts { height: 63px; border-bottom: 1px solid #ddd; display: flex; justify-content: center; gap: 5px; padding-top: 12px; }
.save, .cancel { width: 59px; height: 38px; }
.save { background: #428bca; } .cancel { background: #d15b47; }
.status { height: 30px; flex: none; background: #f7f7f7; border-top: 1px solid #bbb; border-bottom: 1px solid #aaa; display: flex; align-items: center; padding-left: 18px; font: 15px/26px "Noto Sans CJK SC", sans-serif; color: #444; }
.sale { margin-left: 4px; width: 1190px; }
.play { margin-right: 2px; }
.live { width: 88px; }
.cross { color: #13b85a; margin-left: 5px; width: 86px; }
.s-b { margin-left: 26px; }
.acc { margin-left: 4px; width: 72px; }
.dl { margin-left: 4px; width: 35px; }
.zoom { margin-left: -23px; font-family: "Open Sans", sans-serif; font-size: 15.500px; }
.taskbar { height: 50px; flex: none; background: #02040a; display: flex; align-items: center; color: #fff; }
.start { width: 60px; display: flex; justify-content: center; }
.cortana { width: 430px; height: 50px; background: #333; display: flex; align-items: center; padding-left: 11px; color: #999; font: 300 19px "Noto Sans CJK SC", sans-serif; gap: 6px; }
.cortana span { margin-top: -3px; }
.mic { margin-left: auto; margin-right: 18px; }
.ime { font: 18px "Noto Sans CJK SC", sans-serif; margin: -2px 16px 0 3px; }
.clock { width: 118px; display: flex; flex-direction: column; align-items: center; font-size: 15.700px; line-height: 22.500px; margin-top: -1px; }
.note { margin-left: 3px; }
.edge { width: 1px; height: 50px; background: #555; margin-left: 24px; margin-right: 5px; }
.logo { position: absolute; left: 0; top: 0; }
.topshade { position: absolute; left: 1444px; top: 0; width: 346px; height: 1px; background: #8d8d8d; box-shadow: 0 0 4px 1px rgba(0,0,0,.3); }
</style>
